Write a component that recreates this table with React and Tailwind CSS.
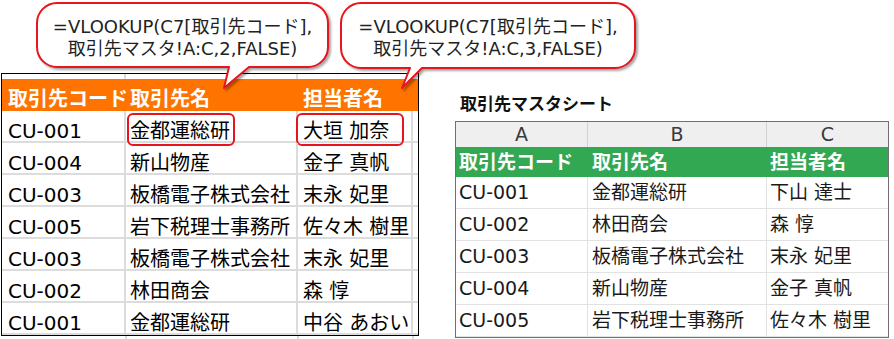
import React from 'react';

const leftRows = [
  ['CU-001', '金都運総研', '大垣 加奈'],
  ['CU-004', '新山物産', '金子 真帆'],
  ['CU-003', '板橋電子株式会社', '末永 妃里'],
  ['CU-005', '岩下税理士事務所', '佐々木 樹里'],
  ['CU-003', '板橋電子株式会社', '末永 妃里'],
  ['CU-002', '林田商会', '森 惇'],
  ['CU-001', '金都運総研', '中谷 あおい'],
];

const masterRows = [
  ['CU-001', '金都運総研', '下山 達士'],
  ['CU-002', '林田商会', '森 惇'],
  ['CU-003', '板橋電子株式会社', '末永 妃里'],
  ['CU-004', '新山物産', '金子 真帆'],
  ['CU-005', '岩下税理士事務所', '佐々木 樹里'],
];

const Callouts = () => (
  <>
    <svg className="absolute left-0 top-0" width="894" height="100" viewBox="0 0 894 100">
      <defs>
        <filter id="shadow" x="-10%" y="-10%" width="120%" height="140%">
          <feDropShadow dx="2" dy="2" stdDeviation="1" floodColor="#000" floodOpacity="0.35" />
        </filter>
      </defs>
      <path
        d="M57 3H308A20 20 0 0 1 328 23V47A20 20 0 0 1 308 67H249L224 88L229 67H57A20 20 0 0 1 37 47V23A20 20 0 0 1 57 3Z"
        fill="#fff" stroke="#e5141e" strokeWidth="2" strokeLinejoin="round" filter="url(#shadow)"
      />
      <path
        d="M361 3H615A20 20 0 0 1 635 23V48A20 20 0 0 1 615 68H422L402 88L410 68H361A20 20 0 0 1 341 48V23A20 20 0 0 1 361 3Z"
        fill="#fff" stroke="#e5141e" strokeWidth="2" strokeLinejoin="round" filter="url(#shadow)"
      />
    </svg>
    <div className="absolute left-[37px] top-[16px] w-[291px] text-center text-[18px] leading-[22px] text-[#222] whitespace-nowrap">
      <div>=VLOOKUP(C7[取引先コード],</div>
      <div>取引先マスタ!A:C,2,FALSE)</div>
    </div>
    <div className="absolute left-[341px] top-[16px] w-[294px] text-center text-[18px] leading-[22px] text-[#222] whitespace-nowrap">
      <div>=VLOOKUP(C7[取引先コード],</div>
      <div>取引先マスタ!A:C,3,FALSE)</div>
    </div>
  </>
);

const Mark = ({ className }) => (
  <span className={`absolute top-[2px] w-[108px] h-[33px] rounded-[6px] border-2 border-[#e5141e] ${className}`} />
);

const LeftTable = () => (
  <div className="pt-[73px] pl-[1px]">
    <div className="w-[418px] border border-black">
      <div className="grid grid-cols-[124px_172px_115px_5px] h-[5px]">
        <div className="border-r-2 border-[#dcdcdc]" />
        <div className="border-r-2 border-[#dcdcdc]" />
        <div className="border-r-2 border-[#dcdcdc]" />
        <div />
      </div>
      <div className="grid grid-cols-[124px_172px_115px_5px] h-[32px] bg-[#ff7300] text-white font-bold text-[20px] leading-[20px] pt-[10px] whitespace-nowrap">
        <div className="pl-[6px]">取引先コード</div>
        <div className="pl-[4px]">取引先名</div>
        <div className="pl-[5px]">担当者名</div>
        <div />
      </div>
      {leftRows.map((r, i) => (
        <div key={i} className="grid grid-cols-[124px_172px_115px_5px] text-[20px] leading-[20px] text-black whitespace-nowrap">
          <div className="h-[32px] pt-[10px] pl-[6px] border-r-2 border-b-2 border-[#dcdcdc]">{r[0]}</div>
          <div className="relative h-[32px] pt-[10px] pl-[4px] border-r-2 border-b-2 border-[#dcdcdc]">
            {r[1]}
            {i === 0 && <Mark className="left-[1px]" />}
          </div>
          <div className="relative h-[32px] pt-[10px] pl-[5px] border-r-2 border-b-2 border-[#dcdcdc]">
            {r[2]}
            {i === 0 && <Mark className="-left-[2px]" />}
          </div>
          <div className="h-[32px] border-b-2 border-[#dcdcdc]" />
        </div>
      ))}
    </div>
    <div className="grid grid-cols-[125px_172px_115px] h-[6px] pl-[1px]">
      <div className="border-r-2 border-[#dcdcdc]" />
      <div className="border-r-2 border-[#dcdcdc]" />
      <div className="border-r-2 border-[#dcdcdc]" />
    </div>
  </div>
);

const MasterTable = () => (
  <div className="ml-[36px] pt-[93px]">
    <div className="h-[22px] pl-[5px] text-[17px] leading-[22px] font-bold text-[#111] whitespace-nowrap">取引先マスタシート</div>
    <div className="mt-[6px] w-[434px] border border-[#707070] text-[19px] whitespace-nowrap">
      <div className="grid grid-cols-[132px_179px_121px] h-[25px] bg-[#efefef] text-[#3a3a3a] leading-[25px] text-center">
        <div className="border-r border-[#d2d2d2]">A</div>
        <div className="border-r border-[#d2d2d2]">B</div>
        <div>C</div>
      </div>
      <div className="grid grid-cols-[132px_179px_121px] h-[30px] bg-[#33a852] text-white font-bold leading-[30px]">
        <div className="pl-[3px]">取引先コード</div>
        <div className="pl-[4px]">取引先名</div>
        <div className="pl-[3px]">担当者名</div>
      </div>
      {masterRows.map((r, i) => (
        <div key={i} className="grid grid-cols-[132px_179px_121px] leading-[31px] text-[#1a1a1a]">
          <div className="h-[32px] pl-[3px] border-r border-b border-[#e2e2e2]">{r[0]}</div>
          <div className="h-[32px] pl-[4px] border-r border-b border-[#e2e2e2]">{r[1]}</div>
          <div className="h-[32px] pl-[3px] border-b border-[#e2e2e2]">{r[2]}</div>
        </div>
      ))}
    </div>
  </div>
);

export default function App() {
  return (
    <div className="relative flex w-[894px] h-[339px] overflow-hidden bg-white font-['DejaVu_Sans','Noto_Sans_CJK_JP',sans-serif]">
      <LeftTable />
      <MasterTable />
      <Callouts />
    </div>
  );
}
